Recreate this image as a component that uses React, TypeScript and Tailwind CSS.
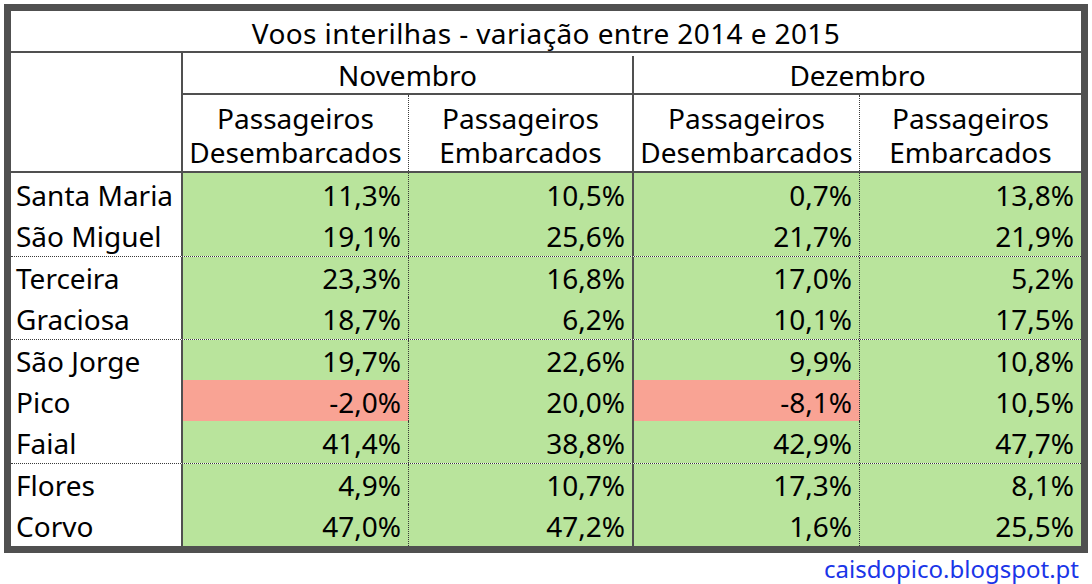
import React from "react";

type Row = { label: string; v: [string, string, string, string]; neg?: [boolean, boolean, boolean, boolean]; sep?: boolean };

const rows: Row[] = [
  { label: "Santa Maria", v: ["11,3%", "10,5%", "0,7%", "13,8%"] },
  { label: "São Miguel", v: ["19,1%", "25,6%", "21,7%", "21,9%"] },
  { label: "Terceira", v: ["23,3%", "16,8%", "17,0%", "5,2%"], sep: true },
  { label: "Graciosa", v: ["18,7%", "6,2%", "10,1%", "17,5%"] },
  { label: "São Jorge", v: ["19,7%", "22,6%", "9,9%", "10,8%"], sep: true },
  { label: "Pico", v: ["-2,0%", "20,0%", "-8,1%", "10,5%"], neg: [true, false, true, false] },
  { label: "Faial", v: ["41,4%", "38,8%", "42,9%", "47,7%"] },
  { label: "Flores", v: ["4,9%", "10,7%", "17,3%", "8,1%"], sep: true },
  { label: "Corvo", v: ["47,0%", "47,2%", "1,6%", "25,5%"] },
];

const cellW = ["w-[226px]", "w-[225px]", "w-[226px]", "w-[221px]"];
const cellB = [
  "border-r border-dotted border-[#3a3a3a]",
  "border-r-2 border-solid border-[#505050]",
  "border-r border-dotted border-[#3a3a3a]",
  "",
];

const subHeads = ["Desembarcados", "Embarcados", "Desembarcados", "Embarcados"];

export default function App() {
  return (
    <div
      className="w-[1092px] h-[584px] bg-white pl-[4px] pt-[4px] text-black"
      style={{ fontFamily: '"Noto Sans", "Open Sans", sans-serif' }}
    >
      <div className="w-[1084px] border-[7px] border-[#505050] box-border">
        {/* Title */}
        <div className="h-[42px] border-b-2 border-[#505050] flex items-center justify-center pt-[3px] text-[28px] leading-none tracking-[0.4px]">
          Voos interilhas - variação entre 2014 e 2015
        </div>
        {/* Header */}
        <div className="flex border-b-2 border-[#505050]">
          <div className="w-[172px] h-[118px] border-r-2 border-[#505050]" />
          <div className="flex-1 flex flex-col">
            <div className="flex h-[42px] border-b-2 border-[#505050] text-[28px] leading-none pt-[3px]">
              <div className="w-[451px] border-r-2 border-[#505050] flex items-center justify-center">Novembro</div>
              <div className="flex-1 flex items-center justify-center">Dezembro</div>
            </div>
            <div className="flex h-[76px] text-[28px] leading-[34px]">
              {subHeads.map((s, i) => (
                <div key={i} className={`${cellW[i]} ${cellB[i]} flex items-center justify-center pt-[3px]`}>
                  <p className="text-center">
                    Passageiros
                    <br />
                    {s}
                  </p>
                </div>
              ))}
            </div>
          </div>
        </div>
        {/* Data rows */}
        <div className="flex flex-col">
          {rows.map((r) => (
            <div
              key={r.label}
              className={`flex h-[41.4px] box-border text-[28px] leading-none ${r.sep ? "border-t border-dotted border-[#3a3a3a]" : ""}`}
            >
              <div className="w-[172px] border-r-2 border-[#505050] pl-[5px] pt-[2px] flex items-center">{r.label}</div>
              {r.v.map((val, i) => (
                <div
                  key={i}
                  className={`${cellW[i]} ${cellB[i]} flex items-center justify-end pr-[7px] pt-[2px] ${
                    r.neg && r.neg[i] ? "bg-[#f9a394]" : "bg-[#b9e49c]"
                  }`}
                >
                  {val}
                </div>
              ))}
            </div>
          ))}
        </div>
      </div>
      <div className="w-[1084px] flex justify-end pr-[9px] pt-[2px] text-[24px] leading-[28px] text-[#1a35e8]">
        caisdopico.blogspot.pt
      </div>
    </div>
  );
}
